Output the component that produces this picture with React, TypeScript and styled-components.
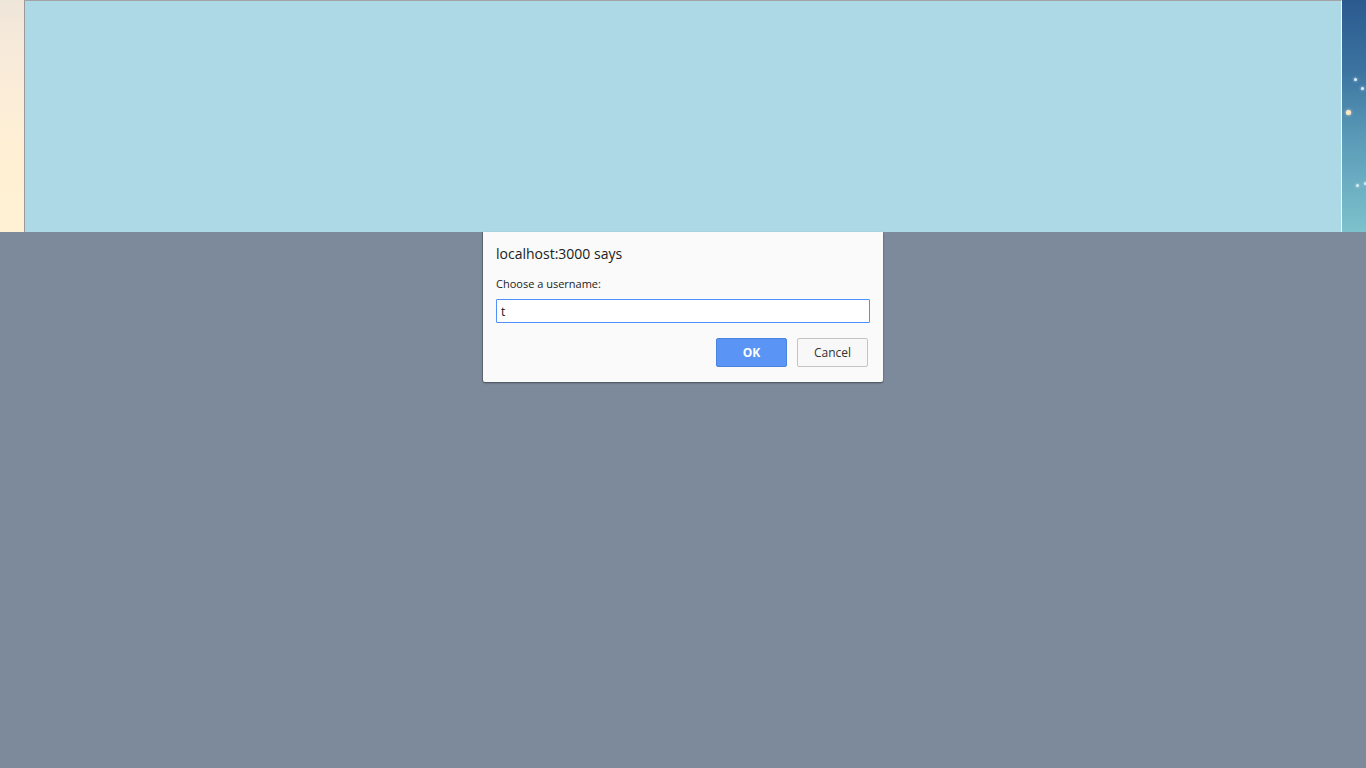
import React from "react";
import styled, { createGlobalStyle } from "styled-components";

const Global = createGlobalStyle`
  html, body { margin: 0; padding: 0; height: 100%; }
  body { background: #7c8a9c; font-family: "Open Sans", "Noto Sans", sans-serif; }
  #root { min-height: 100vh; display: flex; flex-direction: column; }
`;

const Page = styled.div`
  display: flex;
  flex-direction: column;
  flex: 1;
`;

const TopBand = styled.div`
  display: flex;
  height: 232px;
`;

const LeftWall = styled.div`
  width: 24px;
  background: linear-gradient(180deg, #efe6da 0%, #fbecd9 35%, #fff0d4 70%, #fff1d3 100%);
`;

const Panel = styled.div`
  flex: 1;
  background: #add8e6;
  border-top: 1px solid #a3a3a3;
  border-left: 1px solid #9a9a9a;
  border-right: 1px solid #f4fbfd;
`;

const RightWall = styled.div`
  position: relative;
  width: 24px;
  background: linear-gradient(180deg, #2b5a8f 0%, #3b73a0 30%, #5b9bb8 60%, #7dc2cc 100%);
  overflow: hidden;
`;

const Star = styled.span<{ $x: number; $y: number; $s: number; $c: string }>`
  position: absolute;
  left: ${(p) => p.$x}px;
  top: ${(p) => p.$y}px;
  width: ${(p) => p.$s}px;
  height: ${(p) => p.$s}px;
  border-radius: 50%;
  background: ${(p) => p.$c};
  box-shadow: 0 0 3px ${(p) => p.$c};
`;

const Dim = styled.div`
  flex: 1;
  display: flex;
  justify-content: center;
  align-items: flex-start;
  background: #7c8a9c;
`;

const Dialog = styled.div`
  width: 400px;
  box-sizing: border-box;
  background: #fafafa;
  box-shadow: -1px 0 0 #5d6470, 0 1px 2px rgba(0, 0, 0, 0.45);
  border-radius: 0 0 2px 2px;
  padding: 11px 13px 15px 13px;
  display: flex;
  flex-direction: column;
`;

const Title = styled.div`
  font-family: "Open Sans", "Noto Sans", sans-serif;
  font-size: 14px;
  color: #202020;
  line-height: 22px;
`;

const Label = styled.div`
  margin-top: 12px;
  font-family: "Open Sans", "Noto Sans", sans-serif;
  font-size: 11px;
  color: #222;
  line-height: 14px;
`;

const Field = styled.input`
  margin-top: 8px;
  height: 24px;
  box-sizing: border-box;
  border: 1px solid #4d90fe;
  border-radius: 1px;
  background: #fff;
  padding: 0 4px;
  font-family: "Open Sans", "Noto Sans", sans-serif;
  font-size: 12px;
  color: #111;
  outline: none;
`;

const Actions = styled.div`
  display: flex;
  justify-content: flex-end;
  gap: 10px;
  margin-top: 15px;
  padding-right: 2px;
`;

const Button = styled.button<{ $primary?: boolean }>`
  width: 71px;
  height: 29px;
  box-sizing: border-box;
  border-radius: 2px;
  font-family: "Open Sans", "Noto Sans", sans-serif;
  font-size: 12px;
  font-weight: ${(p) => (p.$primary ? 700 : 400)};
  color: ${(p) => (p.$primary ? "#fff" : "#333")};
  background: ${(p) => (p.$primary ? "#5a95f5" : "#f8f8f8")};
  border: 1px solid ${(p) => (p.$primary ? "#4a84e0" : "#c4c4c4")};
  cursor: pointer;
  padding: 0;
`;

const stars = [
  { x: 12, y: 78, s: 3, c: "#dfeeff" },
  { x: 19, y: 87, s: 3, c: "#dfeeff" },
  { x: 4, y: 110, s: 5, c: "#ffe9c4" },
  { x: 14, y: 184, s: 3, c: "#d4ecf5" },
  { x: 22, y: 182, s: 3, c: "#d4ecf5" },
];

export default function App() {
  return (
    <>
      <Global />
      <Page>
        <TopBand>
          <LeftWall />
          <Panel />
          <RightWall>
            {stars.map((s, i) => (
              <Star key={i} $x={s.x} $y={s.y} $s={s.s} $c={s.c} />
            ))}
          </RightWall>
        </TopBand>
        <Dim>
          <Dialog>
            <Title>localhost:3000 says</Title>
            <Label>Choose a username:</Label>
            <Field defaultValue="t" />
            <Actions>
              <Button $primary>OK</Button>
              <Button>Cancel</Button>
            </Actions>
          </Dialog>
        </Dim>
      </Page>
    </>
  );
}
